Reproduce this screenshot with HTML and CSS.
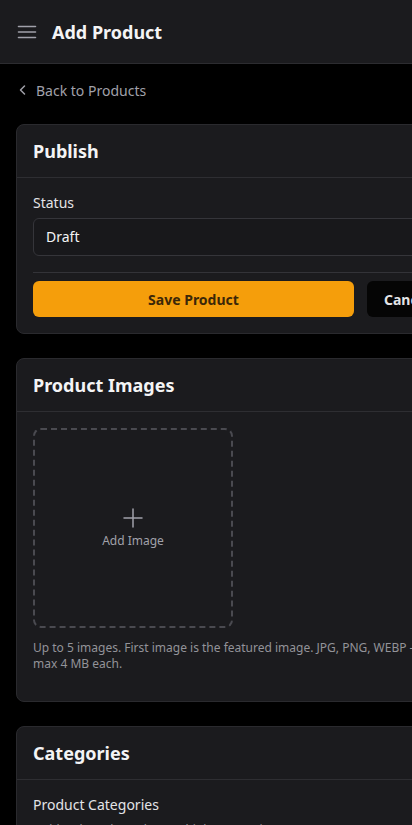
FILE: index.html
```html
<!DOCTYPE html>
<html lang="en">
<head>
<meta charset="utf-8">
<meta name="viewport" content="width=device-width, initial-scale=1">
<title>Add Product</title>
<link rel="stylesheet" href="styles.css">
</head>
<body>
<header class="topbar">
  <button class="menu-btn" aria-label="Menu">
    <svg width="20" height="20" viewBox="0 0 20 20" fill="none" stroke="#a1a1aa" stroke-width="1.6" stroke-linecap="round"><path d="M1.5 4.5h17M1.5 10h17M1.5 15.5h17"/></svg>
  </button>
  <h1 class="page-title">Add Product</h1>
</header>
<main class="main">
  <a class="back-link" href="#">
    <svg width="10" height="12" viewBox="0 0 10 12" fill="none" stroke="#a1a1aa" stroke-width="1.5" stroke-linecap="round" stroke-linejoin="round"><path d="M6.5 2L2.5 6l4 4"/></svg>
    <span>Back to Products</span>
  </a>

  <section class="card">
    <div class="card-head"><h2 class="card-title">Publish</h2></div>
    <div class="card-body">
      <label class="field-label">Status</label>
      <div class="select">Draft</div>
      <div class="divider"></div>
      <div class="actions">
        <button class="btn btn-primary">Save Product</button>
        <button class="btn btn-dark">Cancel</button>
      </div>
    </div>
  </section>

  <section class="card">
    <div class="card-head"><h2 class="card-title">Product Images</h2></div>
    <div class="card-body card-body-images">
      <div class="dropzone">
        <svg width="22" height="22" viewBox="0 0 22 22" fill="none" stroke="#a1a1aa" stroke-width="1.5" stroke-linecap="round"><path d="M11 2v18M2 11h18"/></svg>
        <span class="dz-text">Add Image</span>
      </div>
      <p class="help">Up to 5 images. First image is the featured image. JPG, PNG, WEBP – max 4 MB each.</p>
    </div>
  </section>

  <section class="card">
    <div class="card-head"><h2 class="card-title">Categories</h2></div>
    <div class="card-body">
      <label class="field-label">Product Categories</label>
      <p class="hint">Hold Ctrl/Cmd to select multiple categories.</p>
    </div>
  </section>
</main>
</body>
</html>
```
FILE: styles.css
```css
* { box-sizing: border-box; }
html, body { margin: 0; padding: 0; }
body {
  background: #000;
  color: #e4e4e7;
  font-family: "Noto Sans", "Open Sans", sans-serif;
  min-width: 476px;
  overflow-x: hidden;
}
.topbar {
  height: 64px;
  background: #1b1b1e;
  border-bottom: 1px solid #2c2c30;
  display: flex;
  align-items: center;
  padding: 0 16px;
  gap: 14px;
}
.menu-btn {
  background: none;
  border: 0;
  padding: 0;
  width: 22px;
  height: 22px;
  display: flex;
  align-items: center;
  justify-content: center;
}
.page-title {
  margin: 0;
  font-size: 18px;
  font-weight: 700;
  color: #f4f4f5;
  line-height: 24px;
}
.main {
  padding: 16px;
  display: flex;
  flex-direction: column;
}
.back-link {
  display: flex;
  align-items: center;
  gap: 8px;
  height: 20px;
  padding-left: 2px;
  color: #a1a1aa;
  font-size: 14px;
  text-decoration: none;
  margin-bottom: 24px;
}
.card {
  background: #1b1b1e;
  border: 1px solid #2a2a2e;
  border-radius: 8px;
  margin-bottom: 24px;
}
.card-head {
  padding: 14px 16px;
  border-bottom: 1px solid #2e2e32;
}
.card-title {
  margin: 0;
  font-size: 18px;
  line-height: 24px;
  font-weight: 700;
  color: #f4f4f5;
}
.card-body {
  padding: 15px 16px 16px;
  display: flex;
  flex-direction: column;
}
.field-label {
  font-size: 14px;
  line-height: 20px;
  color: #e4e4e7;
  margin-bottom: 5px;
}
.select {
  height: 38px;
  border: 1px solid #35353a;
  border-radius: 6px;
  background: #18181b;
  padding: 0 12px 2px;
  display: flex;
  align-items: center;
  font-size: 14px;
  color: #f4f4f5;
}
.divider {
  height: 1px;
  background: #333338;
  margin: 16px 0 8px;
}
.actions {
  display: flex;
  gap: 13px;
}
.btn {
  height: 36px;
  border: 0;
  border-radius: 6px;
  font-family: inherit;
  font-size: 14px;
  font-weight: 700;
  padding: 0 17px;
}
.btn-primary {
  flex: 1;
  background: #f59e0b;
  color: #3b2708;
}
.btn-dark {
  width: 76px;
  background: #050505;
  color: #e4e4e7;
  text-align: left;
}
.card-body-images {
  padding-top: 16px;
  padding-bottom: 29px;
}
.dropzone {
  width: 200px;
  height: 200px;
  border: 2px dashed #4a4a50;
  border-radius: 8px;
  display: flex;
  flex-direction: column;
  align-items: center;
  justify-content: center;
  gap: 4px;
}
.dz-text {
  font-size: 12px;
  color: #a1a1aa;
  line-height: 16px;
}
.help {
  margin: 12px 0 0;
  font-size: 12px;
  line-height: 16px;
  color: #939399;
}
.hint {
  margin: 2px 0 0;
  font-size: 12px;
  line-height: 16px;
  color: #939399;
}
```
